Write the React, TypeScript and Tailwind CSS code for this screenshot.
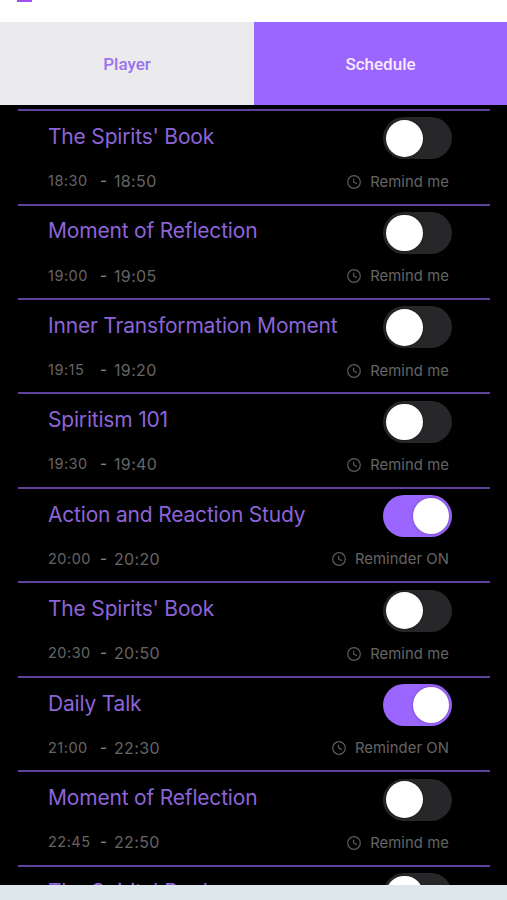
import clsx from 'clsx'

interface IProgram {
  title: string
  start: string
  end: string
  reminder?: boolean
}

const programs: IProgram[] = [
  { title: "The Spirits' Book", start: '18:30', end: '18:50' },
  { title: 'Moment of Reflection', start: '19:00', end: '19:05' },
  { title: 'Inner Transformation Moment', start: '19:15', end: '19:20' },
  { title: 'Spiritism 101', start: '19:30', end: '19:40' },
  { title: 'Action and Reaction Study', start: '20:00', end: '20:20', reminder: true },
  { title: "The Spirits' Book", start: '20:30', end: '20:50' },
  { title: 'Daily Talk', start: '21:00', end: '22:30', reminder: true },
  { title: 'Moment of Reflection', start: '22:45', end: '22:50' },
  { title: "The Spirits' Book", start: '23:00', end: '23:20' },
]

function ClockIcon() {
  return (
    <svg
      className="text-[#5c5c5c]"
      width="14"
      height="14"
      viewBox="0 0 14 14"
      fill="none"
      stroke="currentColor"
    >
      <circle cx="7" cy="7" r="6.3" strokeWidth="1.2" />
      <path d="M6.6 3.8V7L9.8 8.6" strokeWidth="1.2" />
    </svg>
  )
}

function Toggle({ checked }: { checked?: boolean }) {
  return (
    <button
      role="switch"
      aria-checked={!!checked}
      className={clsx(
        'flex h-[42px] w-[69px] items-center rounded-full px-[3px]',
        checked ? 'justify-end bg-[#9b66ff]' : 'justify-start bg-[#272729]'
      )}
    >
      <span className="size-[36.5px] rounded-full bg-white shadow-[0_0_3px_rgba(0,0,0,0.35)]" />
    </button>
  )
}

function ProgramRow({ item }: { item: IProgram }) {
  return (
    <div className="flex h-[94.45px] shrink-0 justify-between border-t-2 border-[#60419c] pr-[38px] pl-[30px]">
      <div className="w-[290px] shrink-0 pt-[10.9px]">
        <div className="text-[21px] leading-[30px] tracking-[-0.19px] whitespace-nowrap text-[#8c64d8]">
          {item.title}
        </div>
        <div className="mt-[19.2px] flex items-center leading-5 text-[#656565]">
          <span className="w-[52px] text-[14.5px] tracking-[0.5px]">{item.start}</span>
          <span className="w-[14px] text-[15px] font-medium text-[#858585]">-</span>
          <span className="text-[16px] tracking-[0.35px]">{item.end}</span>
        </div>
      </div>
      <div className="-ml-10 flex flex-col items-end pt-[6.4px]">
        <Toggle checked={item.reminder} />
        <div className="mt-[12.2px] mr-[3px] flex items-center gap-[9px] text-[14.8px] leading-5 tracking-[0.09px] whitespace-nowrap text-[#656565]">
          <ClockIcon />
          {item.reminder ? 'Reminder ON' : 'Remind me'}
        </div>
      </div>
    </div>
  )
}

export default function App() {
  return (
    <div className="flex h-[900px] w-[507px] flex-col overflow-hidden bg-white font-['Inter',sans-serif]">
      <div className="h-[22px] shrink-0 pl-[17px]">
        <div className="h-[2px] w-[15px] bg-[#a050f0]" />
      </div>

      <div className="grid h-[83px] shrink-0 grid-cols-[254px_253px] font-['Roboto',sans-serif] text-[17px] font-medium">
        <button className="bg-[#ebebed] pt-[2px] text-[#9a72ec]">Player</button>
        <button className="bg-[#9b66ff] pt-[2px] text-[#f7ebff]">Schedule</button>
      </div>

      <div className="flex h-[780px] shrink-0 flex-col overflow-hidden bg-black pt-[4.1px] pr-[17px] pl-[18px]">
        {programs.map((item, index) => (
          <ProgramRow key={index} item={item} />
        ))}
      </div>

      <div className="h-[15px] shrink-0 bg-[#dde8ec]" />
    </div>
  )
}
